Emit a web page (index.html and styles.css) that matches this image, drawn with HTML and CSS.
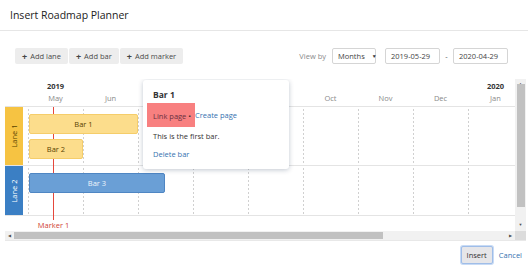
FILE: index.html
```html
<!DOCTYPE html>
<html lang="en">
<head>
  <meta charset="UTF-8">
  <meta name="viewport" content="width=device-width, initial-scale=1.0">
  <title>Insert Roadmap Planner</title>
  <link rel="stylesheet" href="styles.css">
</head>
<body>

  <div class="dialog">
    <div class="dialog-header">
      <h2>Insert Roadmap Planner</h2>
    </div>

    <div class="toolbar">
      <div class="btn-group">
        <button class="tb-btn"><b>+</b> Add lane</button>
        <button class="tb-btn"><b>+</b> Add bar</button>
        <button class="tb-btn"><b>+</b> Add marker</button>
      </div>
      <div class="view-controls">
        <span class="view-label">View by</span>
        <div class="select-box">Months <span class="caret">&#9660;</span></div>
        <div class="date-input">2019-05-29</div>
        <span class="dash">-</span>
        <div class="date-input">2020-04-29</div>
      </div>
    </div>

    <div class="timeline-frame">
      <div class="timeline-row">
        <div class="timeline">
          <!-- Jul..Sep sit under the popup -->
          <div class="tl-head">
            <div class="month"><b>2019</b><span>May</span></div>
            <div class="month"><b></b><span>Jun</span></div>
            <div class="month"><b></b><span></span></div>
            <div class="month"><b></b><span></span></div>
            <div class="month"><b></b><span></span></div>
            <div class="month"><b></b><span>Oct</span></div>
            <div class="month"><b></b><span>Nov</span></div>
            <div class="month"><b></b><span>Dec</span></div>
            <div class="month"><b>2020</b><span>Jan</span></div>
          </div>

          <div class="lane lane-yellow">
            <div class="lane-title"><span>Lane 1</span></div>
            <div class="lane-body">
              <div class="bar" style="width: 109px">Bar 1</div>
              <div class="bar" style="width: 54px">Bar 2</div>
            </div>
          </div>

          <div class="lane lane-blue">
            <div class="lane-title"><span>Lane 2</span></div>
            <div class="lane-body">
              <div class="bar" style="width: 136px">Bar 3</div>
              <div class="bar-empty"></div>
            </div>
          </div>

          <div class="tl-foot"></div>

          <!-- marker: 2019-05-29 -->
          <div class="marker" style="left: 48px">
            <div class="marker-line"></div>
            <div class="marker-label">Marker 1</div>
          </div>

          <div class="bar-popup">
            <h4>Bar 1</h4>
            <div class="popup-links">
              <span class="link-page">Link page <span class="dot">&bull;</span></span>
              <a href="#">Create page</a>
            </div>
            <p>This is the first bar.</p>
            <a href="#" class="delete-link">Delete bar</a>
          </div>
        </div>

        <div class="vscroll">
          <div class="arrow">&#9650;</div>
          <div class="vthumb"></div>
          <div class="arrow arrow-down">&#9660;</div>
        </div>
      </div>

      <div class="hscroll-row">
        <div class="hscroll">
          <div class="arrow">&#9664;</div>
          <div class="hthumb"></div>
          <div class="arrow arrow-right">&#9654;</div>
        </div>
        <div class="scroll-corner"></div>
      </div>
    </div>

    <div class="dialog-footer">
      <button class="insert-btn">Insert</button>
      <a href="#" class="cancel-link">Cancel</a>
    </div>
  </div>

</body>
</html>
```

FILE: styles.css
```css
body {
  margin: 0;
  background-color: white;
  font-family: 'Open Sans', 'Noto Sans', sans-serif;
  color: #333;
}
.dialog {
  width: 528px;
  height: 268px;
  display: flex;
  flex-direction: column;
}
.dialog-header {
  height: 31px;
  border-bottom: 1px solid #e6e6e6;
  display: flex;
  align-items: center;
  padding-left: 10px;
  box-sizing: border-box;
}
.dialog-header h2 {
  margin: 0;
  font-size: 10.5px;
  font-weight: 500;
  color: #222;
}

/* toolbar */
.toolbar {
  display: flex;
  justify-content: space-between;
  align-items: center;
  padding: 17px 20px 0 15px;
  height: 16px;
}
.btn-group {
  display: flex;
  gap: 1px;
}
.tb-btn {
  height: 16px;
  padding: 0 7px;
  border: none;
  border-radius: 2px;
  background-color: #ededed;
  color: #4a4a4a;
  font-family: inherit;
  font-size: 7.5px;
  display: flex;
  align-items: center;
  gap: 3px;
}
.tb-btn b {
  font-size: 9px;
  color: #444;
}
.view-controls {
  display: flex;
  align-items: center;
  font-size: 7.5px;
}
.view-label {
  color: #8a8a8a;
  margin-right: 6px;
}
.select-box,
.date-input {
  height: 16px;
  box-sizing: border-box;
  border: 1px solid #d5d5d5;
  border-radius: 2px;
  display: flex;
  align-items: center;
  color: #444;
}
.select-box {
  width: 44px;
  padding-left: 5px;
  margin-right: 9px;
}
.caret {
  font-size: 5px;
  margin-left: 7px;
  color: #333;
}
.date-input {
  width: 55px;
  padding-left: 5px;
}
.dash {
  width: 13px;
  text-align: center;
  color: #555;
}

/* timeline */
.timeline-frame {
  margin: 15px 2px 0 5px;
  border-bottom: 1px solid #e8e8e8;
}
.timeline-row {
  display: flex;
  height: 152px;
}
.timeline {
  position: relative;
  width: 510px;
  overflow: hidden;
}
.tl-head {
  display: flex;
  padding-left: 23px;
  height: 27px;
  border-bottom: 1px solid #e4e4e4;
}
.month {
  flex: 0 0 55px;
  display: flex;
  flex-direction: column;
  align-items: center;
  font-size: 7.5px;
}
.month b {
  height: 12px;
  line-height: 12px;
  margin-top: 1px;
  font-weight: 700;
  color: #333;
}
.month span {
  color: #8a8a8a;
  line-height: 12px;
}
.lane {
  display: flex;
  border-bottom: 1px solid #e4e4e4;
}
.lane-title {
  flex: 0 0 18px;
  min-width: 0;
  overflow: visible;
  display: flex;
  align-items: center;
  justify-content: center;
}
.lane-title span {
  transform: rotate(-90deg);
  white-space: nowrap;
  font-size: 7.5px;
}
.lane-yellow .lane-title {
  background-color: #f6c342;
  color: #594300;
}
.lane-blue .lane-title {
  background-color: #3b7fc4;
  color: white;
}
.lane-body {
  flex: 1;
  display: flex;
  flex-direction: column;
  gap: 5px;
  padding: 7px 0 6px 6px;
  background-image:
    linear-gradient(to bottom, white 2px, transparent 2px),
    repeating-linear-gradient(to right, #d0d0d0 0 1px, transparent 1px 55px);
  background-size: 100% 4px, 100% 100%;
  background-position: 0 0, 5px 0;
}
/* bars sit above the marker line */
.bar {
  position: relative;
  z-index: 2;
  height: 20px;
  box-sizing: border-box;
  border-radius: 2px;
  display: flex;
  align-items: center;
  justify-content: center;
  font-size: 7.5px;
}
.lane-yellow .bar {
  background-color: #fcdd8c;
  border: 1px solid #f5cd6a;
  color: #594300;
}
.lane-blue .bar {
  background-color: #6a9fd6;
  border: 1px solid #4f86c3;
  color: #eef4fb;
}
.bar-empty {
  height: 11px;
}
.tl-foot {
  height: 16px;
}
.marker {
  position: absolute;
  z-index: 1;
  top: 28px;
  width: 1px;
  display: flex;
  flex-direction: column;
  align-items: center;
}
.marker-line {
  width: 1px;
  height: 113px;
  background-color: #e5473c;
}
.marker-label {
  white-space: nowrap;
  font-size: 7.5px;
  color: #d04437;
  line-height: 10px;
}
.bar-popup {
  position: absolute;
  z-index: 3;
  left: 138px;
  top: 1px;
  width: 146px;
  height: 89px;
  box-sizing: border-box;
  padding: 9px 10px;
  background-color: white;
  border-radius: 3px;
  box-shadow: 0 1px 5px rgba(9, 30, 66, 0.25);
  font-size: 7.5px;
}
.bar-popup h4 {
  margin: 0;
  font-size: 8.5px;
  font-weight: 700;
  color: #333;
  line-height: 11px;
}
.popup-links {
  display: flex;
  align-items: center;
  margin: 3px 0 0 -6px;
}
.link-page {
  background-color: #f88080;
  color: #6a3040;
  padding: 8px 3px 6px 6px;
  width: 39px;
  white-space: nowrap;
}
.dot {
  color: #333;
}
.bar-popup a {
  color: #3572b0;
  text-decoration: none;
}
.bar-popup p {
  margin: 4px 0 8px;
  line-height: 10px;
}

/* fake scrollbars */
.vscroll {
  width: 11px;
  background-color: #f1f1f1;
  display: flex;
  flex-direction: column;
  align-items: center;
}
.arrow {
  font-size: 4px;
  color: #505050;
  line-height: 9px;
  height: 9px;
}
.vthumb {
  width: 8px;
  height: 123px;
  background-color: #c1c1c1;
  margin-top: -4px;
}
.arrow-down {
  margin-top: auto;
  margin-bottom: 2px;
}
.hscroll-row {
  display: flex;
  height: 9px;
}
.hscroll {
  width: 510px;
  background-color: #f1f1f1;
  display: flex;
  align-items: center;
  padding: 0 3px;
  box-sizing: border-box;
}
.hthumb {
  width: 369px;
  height: 7px;
  background-color: #c1c1c1;
  margin-left: 3px;
}
.arrow-right {
  margin-left: auto;
}
.scroll-corner {
  width: 11px;
  background-color: #dcdcdc;
}

/* footer */
.dialog-footer {
  display: flex;
  justify-content: flex-end;
  align-items: center;
  gap: 6px;
  padding: 5px 6px 0 0;
}
.insert-btn {
  height: 18px;
  padding: 0 5px;
  border: 1px solid #9fbde8;
  box-shadow: 0 0 0 1px #c8dbf5;
  border-radius: 2px;
  background-color: #e6e6e9;
  color: #333;
  font-family: inherit;
  font-size: 7.5px;
}
.cancel-link {
  color: #3572b0;
  text-decoration: none;
  font-size: 7.5px;
}
```
